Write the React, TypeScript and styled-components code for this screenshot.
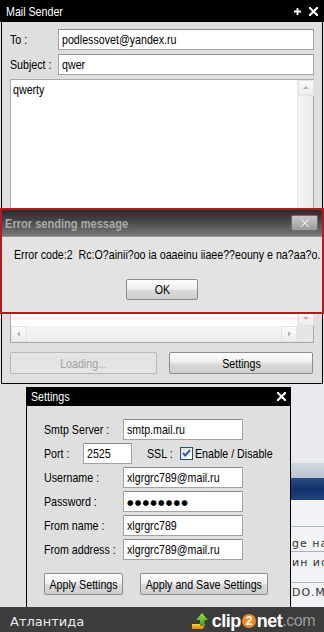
import React from "react";
import styled, { createGlobalStyle } from "styled-components";

const SANS = `"Liberation Sans", Arial, sans-serif`;

const Global = createGlobalStyle`
  html, body { margin: 0; padding: 0; background: #e1e1e1; }
  body { font-family: ${SANS}; font-size: 13px; color: #000; }
  #root { width: 324px; height: 632px; overflow: hidden; }
`;

/* Arial Narrow = Arial condensed to 82% width */
const Narrow = styled.span<{ $origin?: string; $bold?: boolean }>`
  display: inline-block;
  white-space: nowrap;
  font-family: ${SANS};
  font-weight: ${(p) => (p.$bold ? "bold" : "normal")};
  transform: scaleX(0.82);
  transform-origin: ${(p) => p.$origin ?? "left"} center;
`;

const Page = styled.div`
  width: 324px;
  height: 632px;
  display: flex;
  flex-direction: column;
  background: #e1e1e1;
  overflow: hidden;
`;

/* ---------- Mail Sender window ---------- */
const MailWindow = styled.div`
  position: relative;
  flex: 0 0 384px;
  box-sizing: border-box;
  margin-left: 1px;
  width: 322px;
  border: 1px solid #000;
  border-top: none;
  background: #dfdfdf;
  display: flex;
  flex-direction: column;
`;

const TitleBar = styled.div<{ $h: number; $pad: number }>`
  flex: 0 0 ${(p) => p.$h}px;
  background: #000;
  color: #fff;
  display: flex;
  align-items: center;
  justify-content: space-between;
  padding: 0 ${(p) => p.$pad}px;
  font-size: 13px;
`;

const MailTitle = styled(TitleBar)`
  margin: 0 -2px;
`;

const TitleIcons = styled.div`
  display: flex;
  align-items: center;
  gap: 8px;
`;

const FormBody = styled.div`
  flex: 1;
  display: flex;
  flex-direction: column;
  gap: 4px;
  padding: 7px 8px 0 8px;
`;

const FieldRow = styled.div`
  display: flex;
  align-items: center;
  height: 21px;
`;

const Label = styled.div<{ $w: number }>`
  flex: 0 0 ${(p) => p.$w}px;
  min-width: 0;
  font-size: 13px;
  white-space: nowrap;
`;

const Field = styled.div<{ $w?: number }>`
  ${(p) => (p.$w ? `flex: 0 0 ${p.$w}px;` : "flex: 1;")}
  min-width: 0;
  box-sizing: border-box;
  height: 21px;
  border: 1px solid #a3a3a3;
  border-top-color: #8f8f8f;
  background: #fff;
  display: flex;
  align-items: center;
  padding: 0 3px;
  font-size: 13px;
  white-space: nowrap;
  overflow: hidden;
`;

const Dots = styled.span`
  font-family: "DejaVu Sans", sans-serif;
  font-size: 7.5px;
  letter-spacing: 1.2px;
  margin-top: 1px;
`;

const MessageBox = styled.div`
  height: 264px;
  box-sizing: border-box;
  border: 1px solid #a9a9a9;
  background: #fff;
  display: grid;
  grid-template-columns: 1fr 16px;
  grid-template-rows: 1fr 16px;
`;

const MessageText = styled.div`
  padding: 2px 2px;
  line-height: 16px;
`;

const VScroll = styled.div`
  background: linear-gradient(to right, #f4f4f4, #ececec);
  border-left: 1px solid #eaeaea;
  display: flex;
  flex-direction: column;
  justify-content: space-between;
`;

const HScroll = styled.div`
  background: linear-gradient(to bottom, #f6f6f6, #ececec);
  display: flex;
  justify-content: space-between;
  align-items: center;
`;

const ScrollCorner = styled.div`
  background: #e6e6e6;
`;

const ArrowBtn = styled.div`
  width: 16px;
  height: 16px;
  display: flex;
  align-items: center;
  justify-content: center;
  box-sizing: border-box;
  border: 1px solid #e2e2e2;
  background: linear-gradient(#fbfbfb, #ececec);
`;

const ButtonRow = styled.div<{ $gap: number; $top: number }>`
  display: flex;
  gap: ${(p) => p.$gap}px;
  margin-top: ${(p) => p.$top}px;
`;

const Button = styled.div<{ $w: number; $disabled?: boolean; $h?: number }>`
  flex: none;
  width: ${(p) => p.$w}px;
  height: ${(p) => p.$h ?? 22}px;
  box-sizing: border-box;
  border: 1px solid ${(p) => (p.$disabled ? "#b8b8b8" : "#8c8c8c")};
  border-radius: 2px;
  background: ${(p) =>
    p.$disabled
      ? "#e4e4e4"
      : "linear-gradient(to bottom, #fdfdfd 0%, #f0f0f0 45%, #dadada 55%, #cdcdcd 100%)"};
  color: ${(p) => (p.$disabled ? "#a2a2a2" : "#000")};
  display: flex;
  align-items: center;
  justify-content: center;
  font-size: 13px;
  white-space: nowrap;
`;

/* ---------- Error dialog ---------- */
const ErrorDialog = styled.div`
  position: absolute;
  top: 208px;
  left: -2px;
  width: 324px;
  height: 106px;
  box-sizing: border-box;
  border: 2px solid #b8191e;
  background: #e3e3e3;
  display: flex;
  flex-direction: column;
`;

const ErrorTitle = styled.div`
  flex: 0 0 26px;
  background: linear-gradient(to bottom, #2c2c2c 0%, #444 40%, #7a7a7a 100%);
  display: flex;
  align-items: center;
  justify-content: space-between;
  padding: 0 4px 0 3px;
  border-bottom: 1px solid #9a9a9a;
  color: #a9a9a9;
  font-size: 13.5px;
`;

const CloseBtn = styled.div`
  width: 27px;
  height: 16px;
  box-sizing: border-box;
  border: 1px solid #6e6e6e;
  border-radius: 2px;
  background: linear-gradient(to bottom, #c8c8c8, #9c9c9c);
  display: flex;
  align-items: center;
  justify-content: center;
`;

const ErrorBody = styled.div`
  flex: 1;
  display: flex;
  flex-direction: column;
  align-items: center;
  padding-top: 10px;
  gap: 16px;
`;

const ErrorMessage = styled.div`
  align-self: stretch;
  padding-left: 12px;
  line-height: 16px;
  white-space: nowrap;
`;

/* ---------- Lower area ---------- */
const LowerRow = styled.div`
  flex: 0 0 220px;
  display: flex;
`;

const Gutter = styled.div`
  flex: 0 0 26px;
  background: #e1e1e1;
`;

const SettingsWindow = styled.div`
  flex: 0 0 265px;
  box-sizing: border-box;
  margin-top: 3px;
  border-left: 1px solid #000;
  border-right: 1px solid #000;
  background: #dfdfdf;
  display: flex;
  flex-direction: column;
`;

const SettingsBody = styled.div`
  display: flex;
  flex-direction: column;
  gap: 3px;
  padding: 13px 0 0 17px;
`;

const SslLabel = styled.div`
  flex: 0 0 33px;
  min-width: 0;
  margin-left: 15px;
  white-space: nowrap;
`;

const CheckWrap = styled.div`
  display: flex;
  align-items: center;
  gap: 2px;
  white-space: nowrap;
`;

const FakePage = styled.div`
  flex: 1;
  display: flex;
  flex-direction: column;
  background: #e9eaef;
  overflow: hidden;
  font-family: "DejaVu Sans", sans-serif;
  font-size: 11px;
  color: #333;
`;

const PageBlock = styled.div<{ $h: number; $bg: string; $line?: boolean }>`
  flex: 0 0 ${(p) => p.$h}px;
  background: ${(p) => p.$bg};
  ${(p) => (p.$line ? "border-top: 1px solid #a8b3c3;" : "")}
  display: flex;
  white-space: nowrap;
  letter-spacing: 1px;
`;

const PageText = styled.span<{ $top: number }>`
  margin-top: ${(p) => p.$top}px;
  margin-left: 1px;
  line-height: 13px;
`;

/* ---------- Bottom bar ---------- */
const BottomBar = styled.div`
  flex: 0 0 28px;
  background: #3c3c3c;
  display: flex;
  align-items: center;
  justify-content: space-between;
  padding: 0 9px 0 10px;
`;

const BarText = styled.div`
  font-family: "DejaVu Sans", sans-serif;
  font-size: 13px;
  color: #ececec;
`;

const Logo = styled.div`
  display: flex;
  align-items: center;
  font-family: ${SANS};
  font-weight: bold;
  font-size: 18px;
  letter-spacing: -0.5px;
  color: #fff;
`;

const LogoWord = styled.span<{ $ml?: number }>`
  margin-left: ${(p) => p.$ml ?? 0}px;
`;

const LogoTwo = styled.span`
  width: 14px;
  height: 14px;
  border-radius: 50%;
  background: #f28a1c;
  color: #fff;
  font-size: 12px;
  display: inline-flex;
  align-items: center;
  justify-content: center;
  margin: 0 1px;
`;

const LogoCom = styled.span`
  color: #9a9a9a;
  font-weight: normal;
  font-size: 16px;
`;

/* ---------- Icons ---------- */
const XIcon = ({ size, stroke, color }: { size: number; stroke: number; color: string }) => (
  <svg width={size} height={size} viewBox="0 0 10 10">
    <path d="M1 1 L9 9 M9 1 L1 9" stroke={color} strokeWidth={stroke} strokeLinecap="square" />
  </svg>
);

const PlusIcon = () => (
  <svg width="7" height="7" viewBox="0 0 7 7">
    <path d="M3.5 0 V7 M0 3.5 H7" stroke="#fff" strokeWidth="1.8" />
  </svg>
);

const Tri = ({ dir }: { dir: "up" | "down" | "left" | "right" }) => {
  const d = {
    up: "M1 5 L4 2 L7 5 Z",
    down: "M1 3 L4 6 L7 3 Z",
    left: "M5 1 L2 4 L5 7 Z",
    right: "M3 1 L6 4 L3 7 Z",
  }[dir];
  return (
    <svg width="8" height="8" viewBox="0 0 8 8">
      <path d={d} fill="#b4b4b4" />
    </svg>
  );
};

const CheckBox = () => (
  <svg width="13" height="13" viewBox="0 0 13 13">
    <defs>
      <linearGradient id="cbg" x1="0" y1="0" x2="1" y2="1">
        <stop offset="0" stopColor="#dcdcd7" />
        <stop offset="1" stopColor="#ffffff" />
      </linearGradient>
    </defs>
    <rect x="0.5" y="0.5" width="12" height="12" fill="url(#cbg)" stroke="#1c5180" />
    <path d="M3 6 L5.3 8.6 L10 3.2" fill="none" stroke="#2353b8" strokeWidth="2" />
  </svg>
);

const UploadArrow = () => (
  <svg width="16" height="18" viewBox="0 0 16 18">
    <defs>
      <linearGradient id="ga" x1="0" y1="0" x2="0" y2="1">
        <stop offset="0" stopColor="#9be04a" />
        <stop offset="1" stopColor="#3e9a1c" />
      </linearGradient>
      <linearGradient id="oa" x1="0" y1="0" x2="0" y2="1">
        <stop offset="0" stopColor="#ffd23a" />
        <stop offset="1" stopColor="#f07a12" />
      </linearGradient>
    </defs>
    <path d="M0 12 L13 12 L11 17 L0 17 Z" fill="url(#oa)" />
    <path d="M10 1 L16 8 L12.5 8 L12.5 14 L8 14 L8 8 L4 8 Z" fill="url(#ga)" />
  </svg>
);

export default function App() {
  return (
    <>
      <Global />
      <Page>
        <MailWindow>
          <MailTitle $h={22} $pad={6}>
            <Narrow>Mail Sender</Narrow>
            <TitleIcons>
              <PlusIcon />
              <XIcon size={9} stroke={2.4} color="#fff" />
            </TitleIcons>
          </MailTitle>
          <FormBody>
            <FieldRow>
              <Label $w={48}>
                <Narrow>To :</Narrow>
              </Label>
              <Field>
                <Narrow>podlessovet@yandex.ru</Narrow>
              </Field>
            </FieldRow>
            <FieldRow>
              <Label $w={48}>
                <Narrow>Subject :</Narrow>
              </Label>
              <Field>
                <Narrow>qwer</Narrow>
              </Field>
            </FieldRow>
            <MessageBox>
              <MessageText>
                <Narrow>qwerty</Narrow>
              </MessageText>
              <VScroll>
                <ArrowBtn>
                  <Tri dir="up" />
                </ArrowBtn>
                <ArrowBtn>
                  <Tri dir="down" />
                </ArrowBtn>
              </VScroll>
              <HScroll>
                <ArrowBtn>
                  <Tri dir="left" />
                </ArrowBtn>
                <ArrowBtn>
                  <Tri dir="right" />
                </ArrowBtn>
              </HScroll>
              <ScrollCorner />
            </MessageBox>
            <ButtonRow $gap={12} $top={5}>
              <Button $w={147} $disabled>
                <Narrow $origin="center">Loading...</Narrow>
              </Button>
              <Button $w={144}>
                <Narrow $origin="center">Settings</Narrow>
              </Button>
            </ButtonRow>
          </FormBody>

          <ErrorDialog>
            <ErrorTitle>
              <Narrow $bold>Error sending message</Narrow>
              <CloseBtn>
                <XIcon size={8} stroke={1.3} color="#eeeeee" />
              </CloseBtn>
            </ErrorTitle>
            <ErrorBody>
              <ErrorMessage>
                <Narrow>Error code:2&nbsp;&nbsp;Rc:O?ainii?oo ia oaaeinu iiaee??eouny e na?aa?o.</Narrow>
              </ErrorMessage>
              <Button $w={72} $h={21}>
                <Narrow $origin="center">OK</Narrow>
              </Button>
            </ErrorBody>
          </ErrorDialog>
        </MailWindow>

        <LowerRow>
          <Gutter />
          <SettingsWindow>
            <TitleBar $h={19} $pad={4}>
              <Narrow>Settings</Narrow>
              <XIcon size={9} stroke={2.4} color="#fff" />
            </TitleBar>
            <SettingsBody>
              <FieldRow>
                <Label $w={79}>
                  <Narrow>Smtp Server :</Narrow>
                </Label>
                <Field $w={120}>
                  <Narrow>smtp.mail.ru</Narrow>
                </Field>
              </FieldRow>
              <FieldRow>
                <Label $w={39}>
                  <Narrow>Port :</Narrow>
                </Label>
                <Field $w={49}>
                  <Narrow>2525</Narrow>
                </Field>
                <SslLabel>
                  <Narrow>SSL :</Narrow>
                </SslLabel>
                <CheckWrap>
                  <CheckBox />
                  <Narrow>Enable / Disable</Narrow>
                </CheckWrap>
              </FieldRow>
              <FieldRow>
                <Label $w={79}>
                  <Narrow>Username :</Narrow>
                </Label>
                <Field $w={120}>
                  <Narrow>xlgrgrc789@mail.ru</Narrow>
                </Field>
              </FieldRow>
              <FieldRow>
                <Label $w={79}>
                  <Narrow>Password :</Narrow>
                </Label>
                <Field $w={120}>
                  <Dots>●●●●●●●●</Dots>
                </Field>
              </FieldRow>
              <FieldRow>
                <Label $w={79}>
                  <Narrow>From name :</Narrow>
                </Label>
                <Field $w={120}>
                  <Narrow>xlgrgrc789</Narrow>
                </Field>
              </FieldRow>
              <FieldRow>
                <Label $w={79}>
                  <Narrow>From address :</Narrow>
                </Label>
                <Field $w={120}>
                  <Narrow>xlgrgrc789@mail.ru</Narrow>
                </Field>
              </FieldRow>
              <ButtonRow $gap={17} $top={10}>
                <Button $w={79}>
                  <Narrow $origin="center">Apply Settings</Narrow>
                </Button>
                <Button $w={128}>
                  <Narrow $origin="center">Apply and Save Settings</Narrow>
                </Button>
              </ButtonRow>
            </SettingsBody>
          </SettingsWindow>
          <FakePage>
            <PageBlock $h={79} $bg="#e9eaef" />
            <PageBlock $h={15} $bg="linear-gradient(to bottom, #d3d9e2, #b6c1d1)" />
            <PageBlock $h={22} $bg="linear-gradient(to bottom, #2c4f86, #10306a 50%, #1f4580)" />
            <PageBlock $h={26} $bg="#f2f3f6" />
            <PageBlock $h={24} $bg="#f2f3f6" $line>
              <PageText $top={10}>ge наж</PageText>
            </PageBlock>
            <PageBlock $h={30} $bg="#f2f3f6" $line>
              <PageText $top={4}>ин ис</PageText>
            </PageBlock>
            <PageBlock $h={24} $bg="#f2f3f6" $line>
              <PageText $top={3}>DO.M</PageText>
            </PageBlock>
          </FakePage>
        </LowerRow>

        <BottomBar>
          <BarText>Атлантида</BarText>
          <Logo>
            <UploadArrow />
            <LogoWord $ml={4}>clip</LogoWord>
            <LogoTwo>2</LogoTwo>
            <LogoWord>net</LogoWord>
            <LogoCom>.com</LogoCom>
          </Logo>
        </BottomBar>
      </Page>
    </>
  );
}
